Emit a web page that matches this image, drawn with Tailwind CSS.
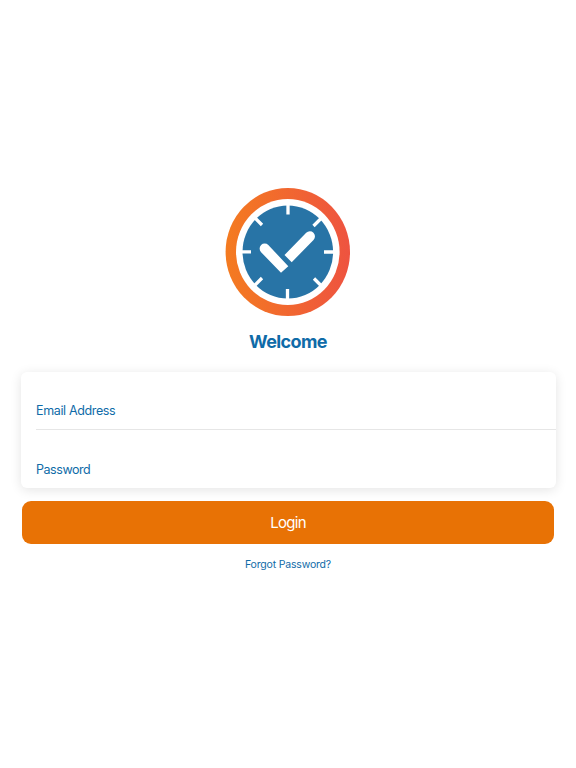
<!DOCTYPE html>
<html lang="en">
<head>
    <meta charset="UTF-8">
    <meta name="viewport" content="width=device-width, initial-scale=1.0">
    <title>Login</title>
    <script src="https://cdn.jsdelivr.net/npm/@tailwindcss/browser@4"></script>
</head>
<body class="bg-white font-['Inter',sans-serif] text-[#0f6ba8]">

    <main class="flex flex-col items-center h-screen pt-[180px] overflow-hidden">

        <!-- Logo -->
        <svg class="w-[140px] h-[142px] shrink-0" viewBox="0 0 140 142" fill="none">
            <defs>
                <linearGradient id="ring" x1="0" y1="0.5" x2="1" y2="0.5">
                    <stop offset="0" stop-color="#f47b20"/>
                    <stop offset="1" stop-color="#ee5340"/>
                </linearGradient>
            </defs>
            <ellipse cx="69.8" cy="72" rx="62.2" ry="64" fill="url(#ring)"/>
            <ellipse cx="69.8" cy="72" rx="51.8" ry="53" fill="#fff"/>
            <ellipse cx="69.8" cy="72" rx="45.3" ry="46.5" fill="#2874a6"/>
            <g stroke="#fff" stroke-width="3.3">
                <path d="M70 24v10.5M69.5 109v10.5M23.5 71.8H33M106 72h10"/>
                <path d="M37 38l7 7M103 38.5l-7.5 7.5M37 105l7-7M103 105.5l-7-7"/>
            </g>
            <g fill="#fff">
                <path d="M43.1 72.2a5 5 0 0 1 7.2-7.2L70.3 86.2 63 92.7z"/>
                <path d="M66.5 75.1L88.2 52.7a5.1 5.1 0 0 1 7.3 7.2L73.7 82.3z"/>
            </g>
        </svg>

        <h1 class="mt-[6px] text-[18px] leading-7 font-bold tracking-[-0.6px]">Welcome</h1>

        <!-- Credentials -->
        <form class="w-full pl-[21px] pr-5 mt-4">
            <div class="h-[116px] pl-[15px] bg-white rounded-md shadow-[0_2px_12px_rgba(0,0,0,0.11)]">
                <label class="flex items-end h-[58px] pb-2 border-b border-[#e6e6e6] text-[12.5px] leading-5 tracking-[-0.36px]">Email Address</label>
                <label class="flex items-end h-[58px] pb-2 text-[12.5px] leading-5 tracking-[-0.44px]">Password</label>
            </div>
            <button type="button" class="block w-[532px] h-[43px] ml-px mt-[13px] pt-px rounded-[9px] bg-[#e87205] text-[15px] tracking-[-0.7px] text-white">Login</button>
        </form>

        <a href="#" class="mt-[13px] text-[10.5px] leading-4 tracking-[-0.18px]">Forgot Password?</a>
    </main>

</body>
</html>
